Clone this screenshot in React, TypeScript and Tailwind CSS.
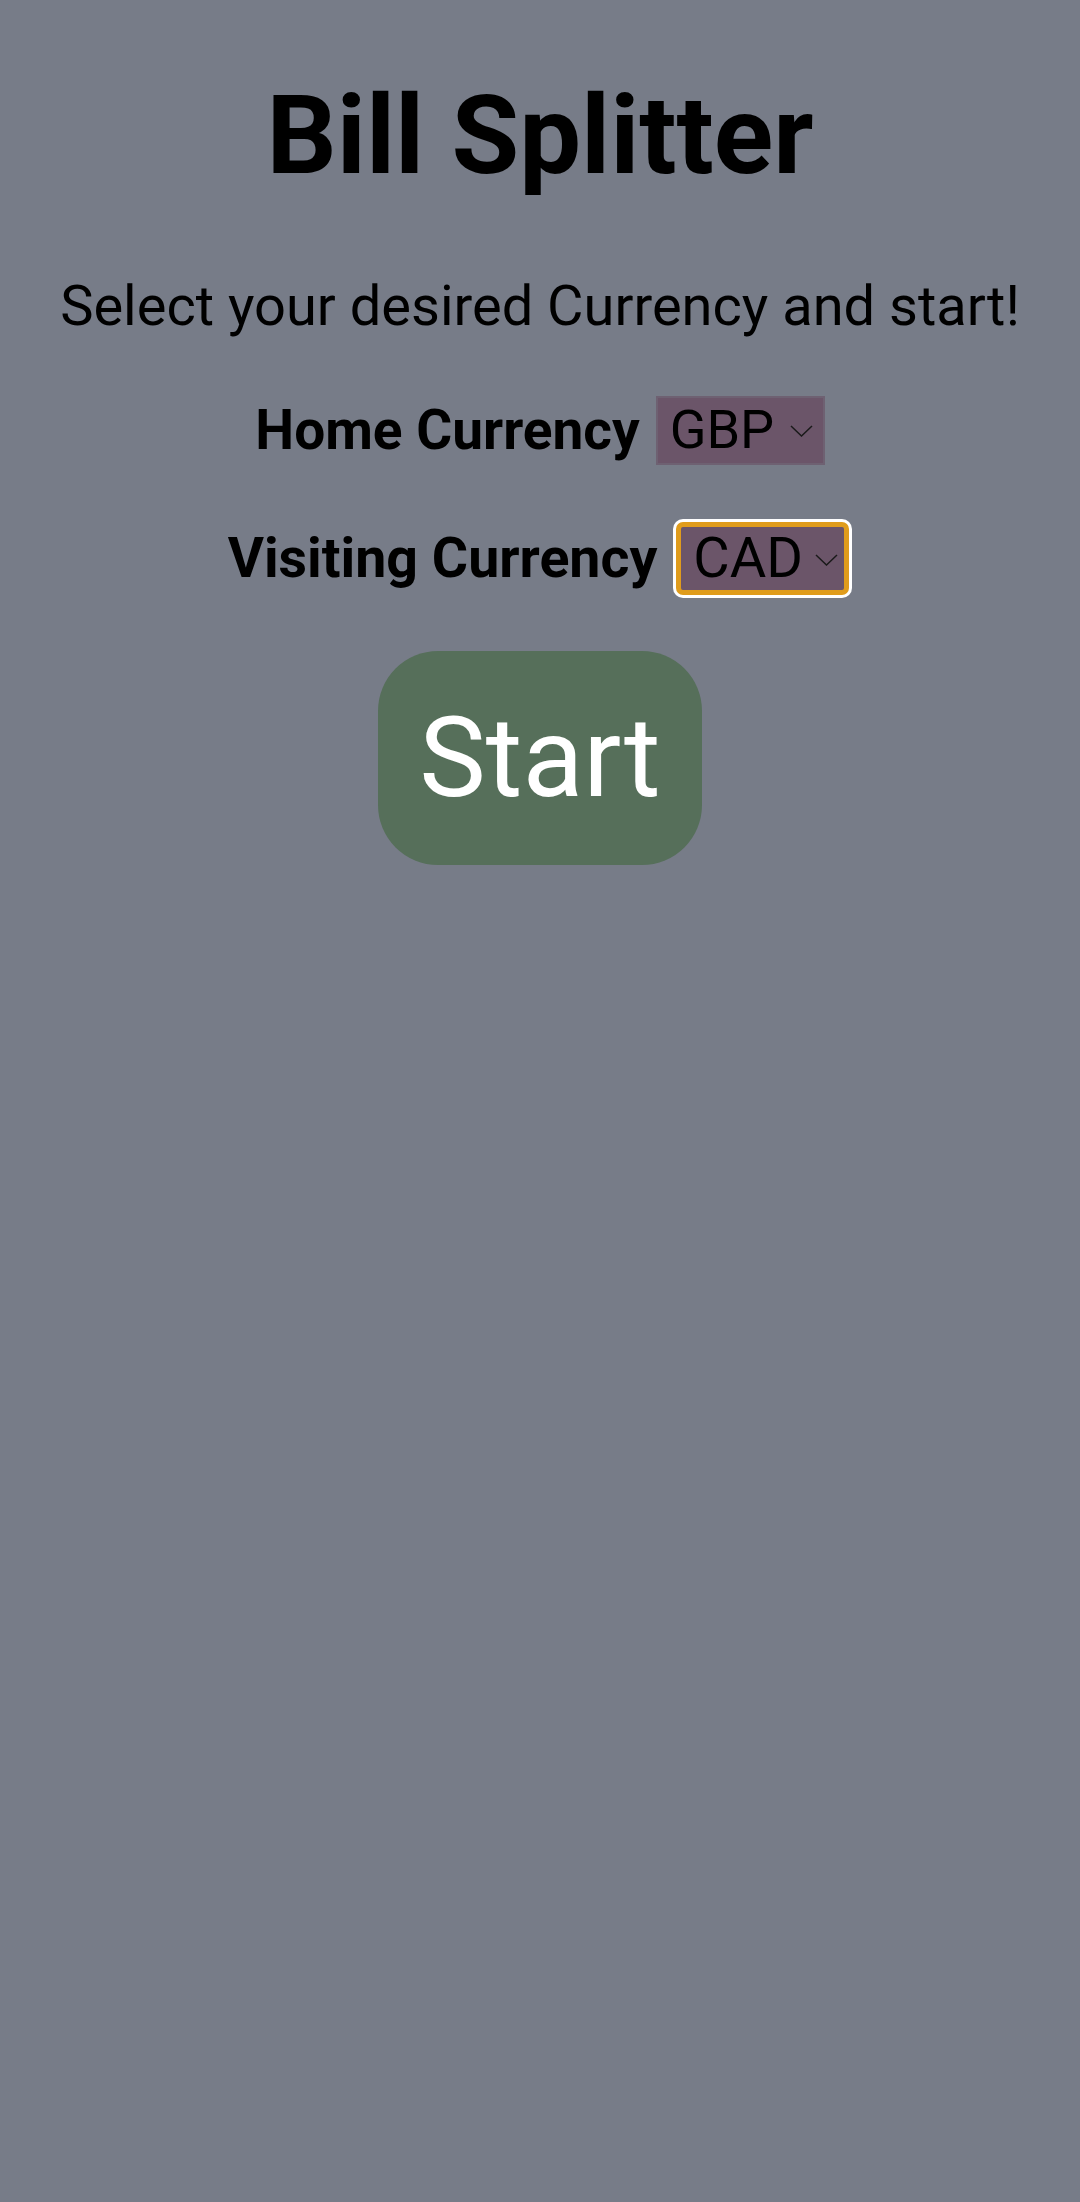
import { useState } from "react";

function Chevron({ className }: { className: string }) {
  return (
    <svg
      className={"pointer-events-none absolute h-[12px] w-[23px] " + className}
      viewBox="0 0 23 12"
      fill="none"
      stroke="#1a1a1a"
      strokeWidth="1.5"
    >
      <path d="M1 1l10.5 10L22 1" />
    </svg>
  );
}

export default function App() {
  const [home, setHome] = useState("GBP");
  const [visiting, setVisiting] = useState("CAD");

  return (
    <div className="min-h-[2202px] bg-[#777c88] font-['Roboto',sans-serif] text-black">
      <div className="flex flex-col items-center pt-[66px]">
        {/* Title */}
        <h1 className="text-[110px] font-bold leading-[140px]">Bill Splitter</h1>

        <p className="mt-[65px] text-[56px] leading-[70px]">Select your desired Currency and start!</p>

        {/* Currency pickers */}
        <div className="mt-[48px] flex items-center gap-[16px]">
          <span className="text-[55px] font-bold">Home Currency</span>
          <div className="relative">
            <select
              value={home}
              onChange={(e) => setHome(e.target.value)}
              className="h-[69px] w-[169px] appearance-none border-2 border-[#6e6172] bg-[#6b5569] pl-[12px] text-[54px] leading-none text-black outline-none"
            >
              <option>GBP</option>
              <option>USD</option>
              <option>EUR</option>
            </select>
            <Chevron className="right-[12px] top-[29px]" />
          </div>
        </div>

        <div className="mt-[45px] flex items-center gap-[16px]">
          <span className="text-[55.5px] font-bold">Visiting Currency</span>
          <div className="relative rounded-[10px] bg-white p-[3px]">
            <select
              value={visiting}
              onChange={(e) => setVisiting(e.target.value)}
              className="h-[73px] w-[173px] appearance-none rounded-[7px] border-[5px] border-[#e09c1c] bg-[#6b5569] pl-[12px] text-[56px] leading-none text-black outline-none"
            >
              <option>CAD</option>
              <option>USD</option>
              <option>EUR</option>
            </select>
            <Chevron className="right-[14px] top-[35px]" />
          </div>
        </div>

        <button className="mt-[51px] h-[214px] w-[324px] rounded-[60px] bg-[#566f5a] text-[112px] text-white">
          Start
        </button>
      </div>
    </div>
  );
}
